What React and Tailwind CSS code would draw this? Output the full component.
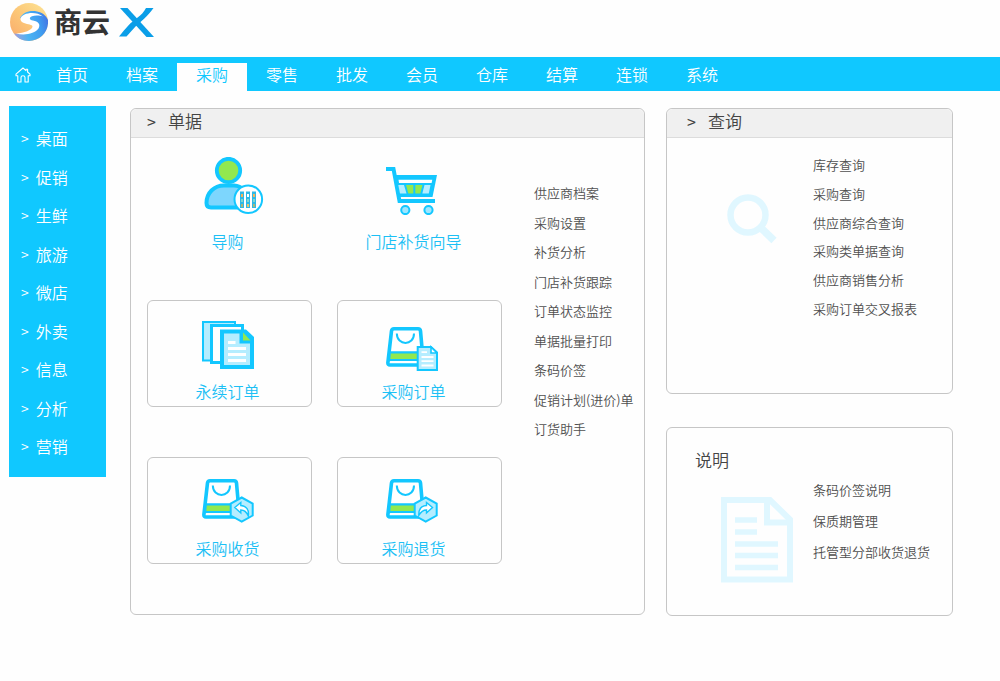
import clsx from "clsx";

const NAV = ["首页", "档案", "采购", "零售", "批发", "会员", "仓库", "结算", "连锁", "系统"];
const SIDE = ["桌面", "促销", "生鲜", "旅游", "微店", "外卖", "信息", "分析", "营销"];

const DOC_LINKS = [
  "供应商档案",
  "采购设置",
  "补货分析",
  "门店补货跟踪",
  "订单状态监控",
  "单据批量打印",
  "条码价签",
  "促销计划(进价)单",
  "订货助手",
];
const QUERY_LINKS = [
  "库存查询",
  "采购查询",
  "供应商综合查询",
  "采购类单据查询",
  "供应商销售分析",
  "采购订单交叉报表",
];
const HELP_LINKS = ["条码价签说明", "保质期管理", "托管型分部收货退货"];

/* ---------- icons ---------- */

function LogoMark() {
  return (
    <svg width="38" height="38" viewBox="0 0 38 38" aria-hidden="true">
      <defs>
        <linearGradient id="warm" x1="0" y1="1" x2="1" y2="0">
          <stop offset="0" stopColor="#f8a86a" />
          <stop offset="0.5" stopColor="#fcc878" />
          <stop offset="1" stopColor="#fde596" />
        </linearGradient>
        <linearGradient id="cool" x1="0" y1="0.6" x2="1" y2="0.4">
          <stop offset="0" stopColor="#9aa0e0" />
          <stop offset="0.35" stopColor="#4cb4f2" />
          <stop offset="0.75" stopColor="#3f9df0" />
          <stop offset="1" stopColor="#4578e4" />
        </linearGradient>
      </defs>
      <circle cx="19" cy="19" r="19" fill="url(#warm)" />
      <path d="M10 15C13 9 20 7 27 8.5C32 9.5 36 12 38 17C39 29 30 38 19 38C12 38 7 35 4 30.5C12 32 20 30 25 26L26 19Z" fill="url(#cool)" />
      <path d="M33 13.5C28 9.5 20 9 14.5 11.5C9.5 14 9 18 14 20C18 21.5 22.5 21.5 22.5 23.5C22.5 27 14 30 6 30.5C15 33 25 30.5 28.5 25.5C31 21 28 18.5 23 17.5C19 16.7 19 14.5 22 13.2C25 12 30 12.3 33 13.5Z" fill="#fff" />
    </svg>
  );
}

function LogoX() {
  return (
    <svg width="35" height="29" viewBox="0 0 35 29" aria-hidden="true">
      <path d="M1 0H8.5L35 29H27.5L1 0Z" fill="#0a9ee8" />
      <path d="M27 0H34.5C28 9 22 13.5 16.5 18.5L7.5 28.5H0C7 20 12 14 18 10C22 7 25 4 27 0Z" fill="#0a9ee8" />
    </svg>
  );
}

function HomeIcon() {
  return (
    <svg width="16" height="16" viewBox="0 0 16 16" fill="none" stroke="#fff" strokeWidth="1.1" strokeLinejoin="round" aria-hidden="true">
      <path d="M8 1L1 7.2V8.8H2.8V15H6V10.5Q6 8.8 8 8.8T10 10.5V15H13.2V8.8H15V7.2L12.6 5V2.2H11V3.6Z" />
    </svg>
  );
}

function GuideIcon() {
  return (
    <svg width="72" height="58" viewBox="-12 0 72 58" aria-hidden="true">
      <path d="M2.5 46C2.5 36 10 28.5 20 28.5H30C38 29 44 35 44 42V50.5H7Q2.5 50.5 2.5 46Z" fill="#7dd6fd" stroke="#13c7ff" strokeWidth="4" />
      <circle cx="24.5" cy="13.5" r="11.7" fill="#92e84f" stroke="#13c7ff" strokeWidth="3.8" />
      <circle cx="44.3" cy="42.3" r="13.8" fill="#fff" stroke="#13c7ff" strokeWidth="2" />
      {[36, 42, 48].map((x) => (
        <g key={x}>
          <rect x={x} y="34.5" width="4" height="16.5" fill="#2fb9e6" />
          <rect x={x + 1} y="37" width="2" height="3" fill={x === 42 ? "#fff" : "#f2b45a"} />
          <rect x={x + 1} y="42" width="2" height="3" fill="#7fd8d0" />
          <rect x={x + 1} y="47" width="2" height="3" fill={x === 42 ? "#e3c66c" : "#a6b97b"} />
        </g>
      ))}
    </svg>
  );
}

function CartIcon() {
  return (
    <svg width="52" height="58" viewBox="0 -10 52 58" aria-hidden="true">
      <path d="M0 2H7.5L13.5 34H49" fill="none" stroke="#13c7ff" strokeWidth="4" />
      <path d="M9 8H51L46.5 30H13Z" fill="#13c7ff" />
      <path d="M12.5 12.8H46.3L45.6 16H13Z" fill="#fff" />
      <path d="M12.3 18H18L20.5 26.5H14Z" fill="#b5edff" />
      <path d="M20 18H27.3V26.5H22.3Z" fill="#92e84f" />
      <path d="M29.3 18H36.5L34.3 26.5H29.3Z" fill="#92e84f" />
      <path d="M38.5 18H44.5L42.8 26.5H36.3Z" fill="#b5edff" />
      <circle cx="19.3" cy="43" r="4.1" fill="#9ee6ff" stroke="#13c7ff" strokeWidth="2" />
      <circle cx="42.5" cy="43" r="4.1" fill="#9ee6ff" stroke="#13c7ff" strokeWidth="2" />
    </svg>
  );
}

function StackIcon() {
  return (
    <svg width="52" height="50" viewBox="0 0 52 50" aria-hidden="true">
      <rect x="1" y="1" width="32" height="38.5" fill="#b5edff" stroke="#13c7ff" strokeWidth="2" />
      <rect x="9.5" y="4.5" width="31" height="37" fill="#fff" stroke="#13c7ff" strokeWidth="3" />
      <path d="M18 8.5H44L52 16V48H18Z" fill="#13c7ff" />
      <path d="M22 12.5H37.5V22.5H48V44H22Z" fill="#b5edff" />
      <path d="M41 11.5L48.5 19.5H41Z" fill="#92e84f" />
      <path d="M26 21.5H33.5M26 27.5H44M26 33.5H44M26 39.5H44" stroke="#fff" strokeWidth="3" />
    </svg>
  );
}

function Bag() {
  return (
    <>
      <path d="M8 1.8H32Q34.3 1.8 34.5 4L37.3 35.5Q37.4 38 35 38H4Q1.7 38 1.9 35.5L5.5 4Q5.8 1.8 8 1.8Z" fill="#fff" stroke="#13c7ff" strokeWidth="3.6" />
      <path d="M10.8 6.5C11 19 28 19 28 6.5" fill="none" stroke="#13c7ff" strokeWidth="2" />
      <path d="M4 24.2H36V34.2H3Z" fill="#13c7ff" />
      <path d="M4.8 26.5H35V32H4.3Z" fill="#92e84f" />
      <path d="M4.2 34H35.2V36H4Z" fill="#fff" />
    </>
  );
}

function BagOrderIcon() {
  return (
    <svg width="52" height="50" viewBox="0 -6 52 50" aria-hidden="true">
      <Bag />
      <path d="M31.7 20H45L51 25.5V43H31.7Z" fill="#b5edff" stroke="#13c7ff" strokeWidth="2" />
      <path d="M45 20V26H51Z" fill="#fff" stroke="#13c7ff" strokeWidth="1.6" />
      <path d="M35.5 25.2H41M35.5 30H47.5M35.5 34.2H47.5M35.5 38.5H47.5" stroke="#fff" strokeWidth="1.8" />
    </svg>
  );
}

function BagArrowIcon({ forward }) {
  return (
    <svg width="52" height="50" viewBox="0 -1 52 50" aria-hidden="true">
      <Bag />
      <path d="M39.7 18.5L50.7 24.5V36.5L39.7 42.7L28.7 36.5V24.5Z" fill="#b5edff" stroke="#13c7ff" strokeWidth="2" />
      <path
        d={
          forward
            ? "M46.5 28.5L40.5 23.5V26.5C35.5 26.8 32.5 30 32.8 36.5C35 32.5 37 31 40.5 31V34Z"
            : "M32.8 28.5L38.8 23.5V26.5C44 26.8 47.3 30.5 46.3 37C44.5 32.5 42.5 31 38.8 31V34Z"
        }
        fill="#fff"
        stroke="#13c7ff"
        strokeWidth="1.4"
      />
    </svg>
  );
}

function SearchMark() {
  return (
    <svg width="50" height="50" viewBox="0 0 50 50" fill="none" stroke="#e0f7ff" strokeWidth="6.5" aria-hidden="true">
      <circle cx="21" cy="21" r="17.5" />
      <path d="M33 33L47 46.5" strokeWidth="7.5" />
    </svg>
  );
}

function PageMark() {
  return (
    <svg width="72" height="86" viewBox="0 0 72 86" fill="none" stroke="#e0f7ff" aria-hidden="true">
      <path d="M3 3H49L69 22.5V82.5H3Z" strokeWidth="6" />
      <path d="M46 3V25.5H70" strokeWidth="6" />
      <path d="M14 23H36M14 35H36M14 47H57M14 58.5H57M14 70.5H57" strokeWidth="5.5" />
    </svg>
  );
}

/* ---------- pieces ---------- */

const TILES = [
  { label: "导购", icon: <GuideIcon />, plain: true },
  { label: "门店补货向导", icon: <CartIcon />, plain: true },
  { label: "永续订单", icon: <StackIcon /> },
  { label: "采购订单", icon: <BagOrderIcon /> },
  { label: "采购收货", icon: <BagArrowIcon /> },
  { label: "采购退货", icon: <BagArrowIcon forward /> },
];

function Tile({ label, icon, plain }) {
  return (
    <button
      type="button"
      className={clsx(
        "flex h-[107px] flex-col items-center rounded-md border text-base leading-4 text-[#1cc0f5] odd:pr-1 even:pr-3 even:[&>svg]:mr-1",
        plain ? "gap-[18px] border-transparent pt-[13px]" : "gap-3 border-[#c6c6c6] pt-5"
      )}
    >
      {icon}
      <span className="whitespace-nowrap">{label}</span>
    </button>
  );
}

function PanelTitle({ children, className }) {
  return (
    <h2
      className={clsx(
        "flex h-[29px] items-center gap-3 rounded-t-md border-b border-[#dcdcdc] bg-[#f0f0f0] pb-1 text-[17px] leading-6 text-[#444]",
        className
      )}
    >
      <span className="text-base font-normal">&gt;</span>
      {children}
    </h2>
  );
}

function LinkList({ items, className }) {
  return (
    <ul className={clsx("flex flex-col justify-between text-[13px] leading-5 text-[#505050]", className)}>
      {items.map((item) => (
        <li key={item}>
          <a href="#" className="whitespace-nowrap hover:text-[#10c8ff]">{item}</a>
        </li>
      ))}
    </ul>
  );
}

export default function App() {
  return (
    <div className="min-h-screen bg-[#fefefe] font-['Noto_Sans_CJK_SC',sans-serif] font-[350]">
      <header className="flex h-[57px] items-start pl-[10px] pt-[3px]">
        <LogoMark />
        <h1 className="ml-[6px] text-[28px] font-bold leading-9 text-[#333]">商云</h1>
        <div className="ml-[9px] mt-[5px]">
          <LogoX />
        </div>
      </header>

      <nav className="flex h-[34px] items-end bg-[#10c8ff] pl-[15px] text-base leading-[22px] text-white">
        <a href="#" aria-label="主页" className="mb-2 w-[22px]">
          <HomeIcon />
        </a>
        {NAV.map((item) => (
          <a
            key={item}
            href="#"
            className={clsx(
              "flex h-7 w-[70px] justify-center",
              item === "采购" && "bg-[#fefefe] text-[#10c8ff]"
            )}
          >
            {item}
          </a>
        ))}
      </nav>

      <div className="grid grid-cols-[97px_539fr_308fr] items-start pb-10 pl-[9px] pr-[47px] pt-[15px]">
        <aside className="flex min-h-[371px] flex-col justify-between bg-[#10c8ff] pb-[19px] pl-3 pt-5 text-base leading-6 text-white">
          {SIDE.map((item) => (
            <a key={item} href="#" className="flex gap-[7px]">
              <span className="text-sm leading-6">&gt;</span>
              {item}
            </a>
          ))}
        </aside>

        <section className="ml-6 mt-[2px] rounded-md border border-[#c6c6c6]">
          <PanelTitle className="pl-4">单据</PanelTitle>
          <div className="flex gap-8 pb-[50px] pl-4 pt-[5px]">
            <div className="grid shrink-0 grid-cols-[165px_165px] gap-x-[25px] gap-y-[50px]">
              {TILES.map((tile) => (
                <Tile key={tile.label} {...tile} />
              ))}
            </div>
            <LinkList items={DOC_LINKS} className="mt-10 h-64" />
          </div>
        </section>

        <div className="ml-[21px] mt-[2px] flex flex-col gap-[33px]">
          <section className="min-h-[286px] rounded-md border border-[#c6c6c6]">
            <PanelTitle className="pl-5">查询</PanelTitle>
            <div className="flex pl-[60px] pt-[17px]">
              <div className="w-[86px] shrink-0 pt-[39px]">
                <SearchMark />
              </div>
              <LinkList items={QUERY_LINKS} className="h-[164px]" />
            </div>
          </section>

          <section className="min-h-[189px] rounded-md border border-[#c6c6c6] pt-5">
            <h2 className="pl-7 text-[17px] leading-6 text-[#444]">说明</h2>
            <div className="flex pl-[54px] pt-2">
              <div className="w-[92px] shrink-0 pt-[17px]">
                <PageMark />
              </div>
              <LinkList items={HELP_LINKS} className="h-[82px]" />
            </div>
          </section>
        </div>
      </div>
    </div>
  );
}
